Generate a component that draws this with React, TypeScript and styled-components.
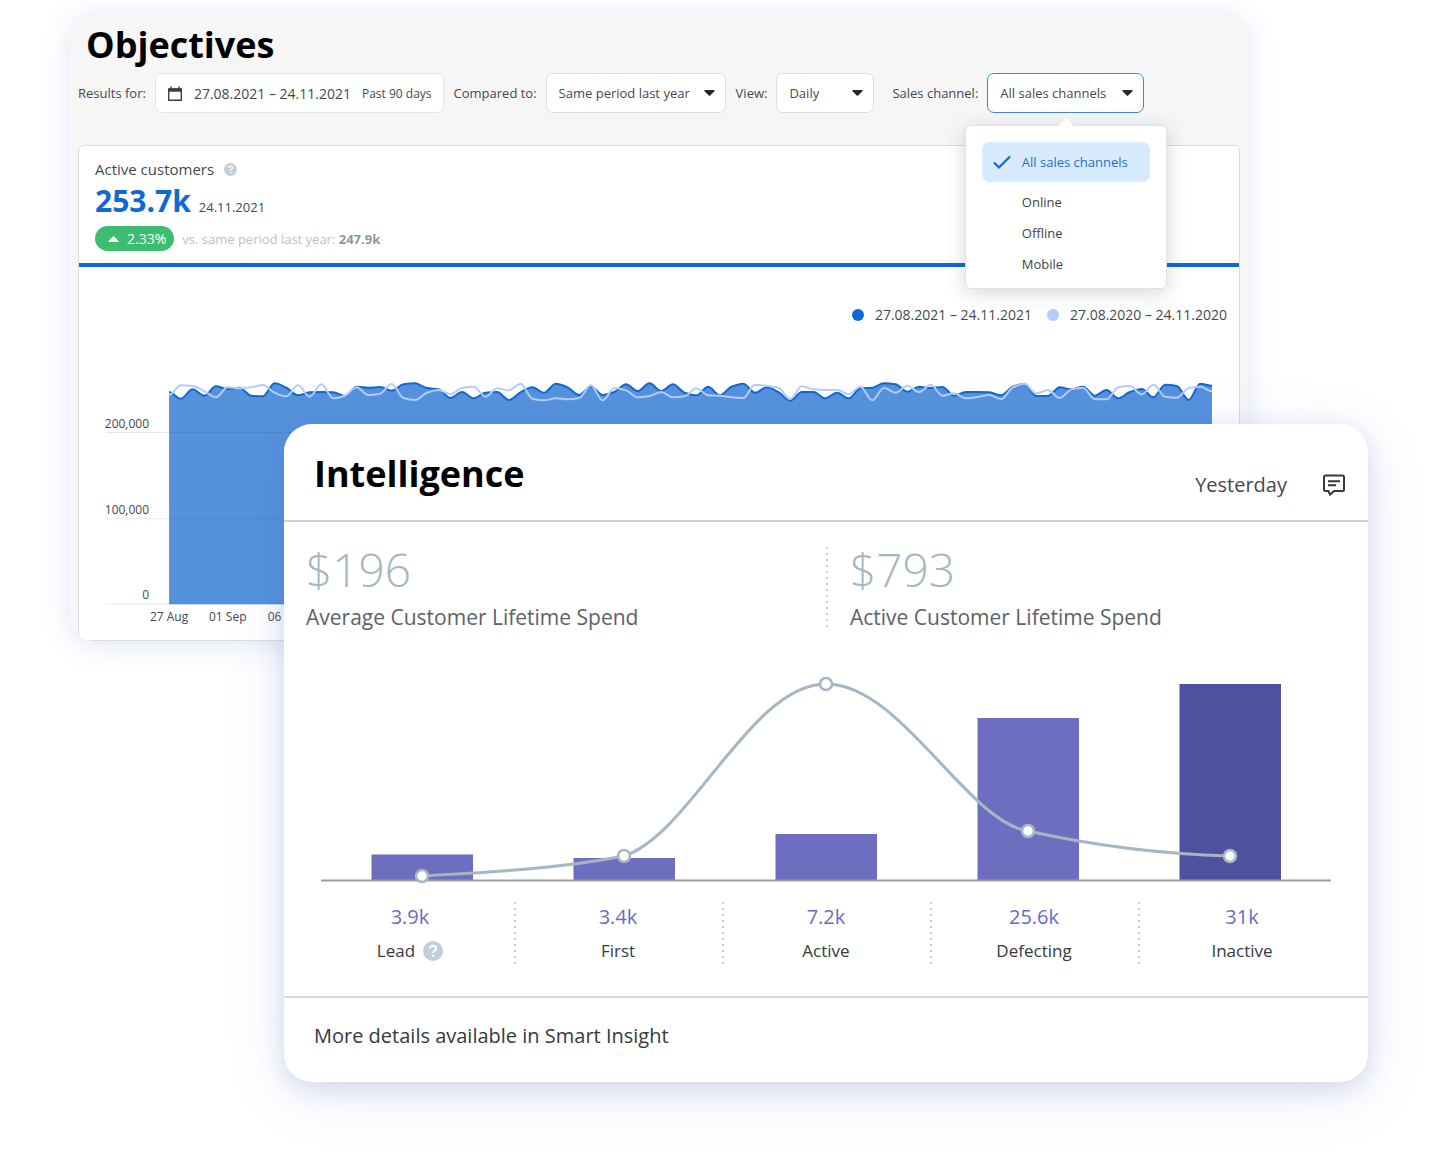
import React, { useState } from 'react';
import styled, { createGlobalStyle } from 'styled-components';

const font = '"Open Sans", "Noto Sans", sans-serif';

const GlobalStyle = createGlobalStyle`
  *, *::before, *::after { box-sizing: border-box; }
  body { margin: 0; background: #fff; color: #45494f; font: 13px/24px ${font}; }
  h2, p, ul, dl, dd, dt { margin: 0; padding: 0; }
  button, select { font: inherit; color: inherit; }
`;

const Page = styled.main`
  padding: 12px 72px 82px 70px;
`;

const Card = styled.section`
  border-radius: 28px;
  overflow: hidden;
  box-shadow: 0 12px 60px rgba(96, 116, 210, 0.13), 0 6px 24px rgba(84, 100, 180, 0.2);
`;

const ObjectivesCard = styled(Card)`
  margin-right: 120px;
  padding: 9px 8px 0;
  border-radius: 24px;
  background: #f6f6f6;
  box-shadow: 0 4px 28px rgba(96, 116, 210, 0.18);
`;

const IntelligenceCard = styled(Card)`
  position: relative;
  margin: -217px 0 0 214px;
  background: #fff;
`;

const Title = styled.h2`
  color: #000;
  font-size: 36px;
  font-weight: 700;
  line-height: 48px;
`;

const ObjectivesTitle = styled(Title)`
  padding-left: 8px;
`;

/* Filter bar */

const Filter = styled.div`
  display: flex;
  align-items: center;
  gap: 9px;
  white-space: nowrap;
`;

const Filters = styled.form`
  display: flex;
  gap: 10px;
  margin: 4px 0 32px;

  ${Filter}:last-child { margin-left: 8px; }
`;

const RangeButton = styled.button`
  display: flex;
  align-items: center;
  gap: 11px;
  height: 40px;
  padding: 2px 11px 0;
  border: 1px solid #e4e5e6;
  border-radius: 7px;
  background: #fff;
  font-size: 14px;
`;

const RangeNote = styled.span`
  font-size: 12px;
`;

const SelectBox = styled.div<{ $width: number }>`
  position: relative;
  width: ${(p) => p.$width}px;
`;

const Select = styled.select<{ $open?: boolean }>`
  appearance: none;
  display: block;
  width: 100%;
  height: 40px;
  padding: 0 28px 0 12px;
  border: 1px solid ${(p) => (p.$open ? '#3d85dc' : '#dcdedf')};
  border-radius: 7px;
  background: #fff;
`;

const Caret = styled.svg`
  position: absolute;
  top: 17px;
  right: 11px;
  pointer-events: none;
`;

const Menu = styled.ul`
  position: absolute;
  top: 52px;
  left: 50%;
  z-index: 2;
  width: 202px;
  margin-left: -101px;
  padding: 16px 16px 9px;
  border: 1px solid #dfe2e4;
  border-radius: 6px;
  background: #fff;
  box-shadow: 0 4px 20px rgba(40, 60, 70, 0.2);
  list-style: none;

  &::before {
    content: '';
    position: absolute;
    top: -6px;
    left: 50%;
    width: 10px;
    height: 10px;
    margin-left: -5px;
    background: #fff;
    transform: rotate(45deg);
  }
`;

const MenuItem = styled.button<{ $selected: boolean }>`
  display: grid;
  grid-template-columns: 20px 1fr;
  align-items: center;
  gap: 10px;
  width: 100%;
  height: ${(p) => (p.$selected ? 40 : 31)}px;
  margin-bottom: ${(p) => (p.$selected ? 4 : 0)}px;
  padding: 0 10px;
  border: 0;
  border-radius: 7px;
  background: ${(p) => (p.$selected ? '#d8ebfe' : 'none')};
  color: ${(p) => (p.$selected ? '#1a6fd6' : '#3f4348')};
  text-align: left;
`;

/* Active customers panel */

const Panel = styled.div`
  border: 1px solid #dcdcdc;
  border-radius: 6px;
  background: #fff;
`;

const PanelHead = styled.div`
  padding: 11px 16px 12px;
  border-bottom: 4px solid #0f69d3;
`;

const Metric = styled.div`
  display: flex;
  align-items: center;
  gap: 10px;
  font-size: 15px;
`;

const Reading = styled.p`
  display: flex;
  align-items: baseline;
  gap: 8px;
  height: 40px;
  line-height: 40px;
`;

const ReadingValue = styled.strong`
  color: #0f69d3;
  font-size: 30px;
  font-weight: 700;
`;

const Comparison = styled.p`
  display: flex;
  align-items: center;
  gap: 8px;
  margin-top: 5px;
  color: #bcc1c6;

  strong { color: #8b96a1; font-weight: 700; }
`;

const Growth = styled.span`
  display: flex;
  align-items: center;
  gap: 8px;
  height: 25px;
  padding: 0 8px 0 13px;
  border-radius: 13px;
  background: #3cbd6f;
  color: #fff;
  font-size: 14px;
`;

const Legend = styled.ul`
  display: flex;
  justify-content: flex-end;
  gap: 15px;
  padding: 36px 12px 0;
  list-style: none;
  font-size: 14px;
`;

const LegendItem = styled.li<{ $color: string }>`
  display: flex;
  align-items: center;
  gap: 11px;

  &::before {
    content: '';
    width: 12px;
    height: 12px;
    border-radius: 50%;
    background: ${(p) => p.$color};
  }
`;

const Chart = styled.svg`
  display: block;
  width: 100%;
  height: auto;

  text { fill: #45494f; font: 12px ${font}; }
`;

/* Intelligence card */

const CardHead = styled.header`
  display: flex;
  align-items: center;
  justify-content: space-between;
  height: 98px;
  padding: 4px 22px 0 30px;
  border-bottom: 2px solid #cfd3d4;
`;

const HeadActions = styled.div`
  display: flex;
  align-items: center;
  gap: 35px;
  padding-top: 22px;
  font-size: 20px;
`;

const IconButton = styled.button`
  display: flex;
  padding: 0;
  border: 0;
  background: none;
  color: #36393d;
`;

const dotted = 'repeating-linear-gradient(#cbcdcf 0 2px, transparent 2px 6px)';

const Kpis = styled.div`
  display: grid;
  grid-template-columns: 1fr 1fr;
  margin-top: 25px;
`;

const Kpi = styled.div`
  height: 83px;
  padding-left: 22px;

  & + & {
    padding-left: 24px;
    background: ${dotted} 0 0 / 2px 100% no-repeat;
  }
`;

const KpiValue = styled.p`
  color: #a5b5c3;
  font-size: 46px;
  font-weight: 300;
  line-height: 44px;
`;

const KpiLabel = styled.p`
  margin-top: 14px;
  color: #5d6268;
  font-size: 21px;
`;

const BarChartArea = styled.div`
  margin-top: 44px;
  padding: 0 37px;
`;

const Stages = styled.dl`
  display: grid;
  grid-template-columns: repeat(5, 1fr);
  margin: 18px 22px 30px;
`;

const Stage = styled.div`
  display: flex;
  flex-direction: column-reverse;
  text-align: center;

  & + & { background: ${dotted} 0 0 / 2px 100% no-repeat; }
`;

const StageValue = styled.dd`
  color: #6a6bc4;
  font-size: 20px;
  line-height: 30px;
`;

const StageName = styled.dt`
  display: flex;
  align-items: center;
  justify-content: center;
  gap: 8px;
  height: 34px;
  padding-top: 3px;
  color: #36393d;
  font-size: 17px;
`;

const CardFoot = styled.footer`
  padding: 24px 30px 32px;
  border-top: 2px solid #d4d6da;
  color: #36393d;
  font-size: 20px;
  line-height: 28px;
`;

function HelpIcon({ size }: { size: number }) {
  return (
    <svg width={size} height={size} viewBox="0 0 20 20" fill="none" role="img" aria-label="Help">
      <circle cx="10" cy="10" r="10" fill="#c1cfdd" />
      <path d="M6.9 7.6C7 5.8 8.300 4.800 10 4.800s3.100 1.100 3.100 2.700c0 2.100-3 2.300-3 4.500" stroke="#fff" strokeWidth="2" />
      <circle cx="10.100" cy="14.700" r="1.300" fill="#fff" />
    </svg>
  );
}

function CalendarIcon() {
  return (
    <svg width="16" height="16" viewBox="0 0 16 16" fill="none" aria-hidden="true">
      <path d="M1.700 3h12.600v11.300H1.700z" stroke="#3a3e44" strokeWidth="1.400" strokeLinejoin="round" />
      <path d="M1.200 2.400h13.600v3.400H1.200z" fill="#3a3e44" />
      <path d="M4 .6v3M12 .6v3" stroke="#3a3e44" strokeWidth="1.500" />
    </svg>
  );
}

function CommentIcon() {
  return (
    <svg width="24" height="24" viewBox="0 0 24 24" fill="none" stroke="currentColor" strokeWidth="2" strokeLinejoin="round" aria-hidden="true">
      <path d="M3.500 2.500h17a1.500 1.500 0 0 1 1.500 1.500v12.500a1.500 1.500 0 0 1-1.500 1.500H12l-4 3.700L6.500 18h-3A1.500 1.500 0 0 1 2 16.500V4a1.500 1.500 0 0 1 1.500-1.500z" />
      <path d="M6 8.300h12M6 12.300h8" />
    </svg>
  );
}

function CheckIcon() {
  return (
    <svg width="20" height="16" viewBox="0 0 20 16" fill="none" aria-hidden="true">
      <path d="M2 8.500l5 5L18 2.500" stroke="#0f69d3" strokeWidth="2.200" />
    </svg>
  );
}

interface DropdownProps {
  id: string;
  label: string;
  width: number;
  value: string;
  options: string[];
  open?: boolean;
  onChange: (value: string) => void;
}

function Dropdown({ id, label, width, value, options, open, onChange }: DropdownProps) {
  return (
    <Filter>
      <label htmlFor={id}>{label}</label>
      <SelectBox $width={width}>
        <Select id={id} $open={open} value={value} onChange={(e) => onChange(e.target.value)}>
          {options.map((o) => <option key={o}>{o}</option>)}
        </Select>
        <Caret width="11" height="6" viewBox="0 0 11 6" aria-hidden="true">
          <path d="M1 0h9a.7.7 0 0 1 .5 1.200L6.200 5.600a1 1 0 0 1-1.400 0L.5 1.200A.7.7 0 0 1 1 0z" fill="#26292d" />
        </Caret>
        {open && (
          <Menu role="listbox" aria-label={label}>
            {options.map((o) => (
              <li key={o} role="presentation">
                <MenuItem type="button" role="option" aria-selected={o === value} $selected={o === value} onClick={() => onChange(o)}>
                  {o === value ? <CheckIcon /> : <span />}
                  {o}
                </MenuItem>
              </li>
            ))}
          </Menu>
        )}
      </SelectBox>
    </Filter>
  );
}

type Point = [number, number];

/* Cubic path that never overshoots its points. */
function smoothPath(pts: Point[]) {
  const slope = pts.map((_, i) => {
    if (i === 0 || i === pts.length - 1) return 0;
    const a = (pts[i][1] - pts[i - 1][1]) / (pts[i][0] - pts[i - 1][0]);
    const b = (pts[i + 1][1] - pts[i][1]) / (pts[i + 1][0] - pts[i][0]);
    return a * b <= 0 ? 0 : (2 * a * b) / (a + b);
  });
  return pts.reduce((d, [x, y], i) => {
    if (i === 0) return `M${x.toFixed(1)},${y.toFixed(1)}`;
    const [px, py] = pts[i - 1];
    const h = (x - px) / 3;
    const c = [px + h, py + slope[i - 1] * h, x - h, y - slope[i] * h, x, y];
    return `${d}C${c.map((n) => n.toFixed(1)).join(' ')}`;
  }, '');
}

/* Daily dips below the chart ceiling, in thirds of a unit. */
const currentYear = [
  66, 86, 58, 77, 49, 57, 53, 77, 79, 40, 53, 76, 67, 66, 67, 78, 50, 53, 51, 62, 43, 40, 54, 58, 84, 66, 85, 68, 66, 90,
  67, 52, 68, 41, 52, 75, 49, 75, 66, 43, 63, 40, 63, 43, 68, 76, 50, 76, 50, 41, 68, 52, 66, 92, 66, 66, 85, 68, 85, 55,
  53, 40, 43, 65, 50, 54, 51, 77, 66, 66, 67, 76, 50, 41, 78, 78, 52, 58, 50, 77, 60, 85, 66, 57, 82, 44, 48, 90, 41, 47,
];
const previousYear = [
  74, 46, 48, 63, 82, 52, 55, 52, 45, 68, 79, 46, 80, 43, 85, 77, 52, 75, 71, 42, 84, 90, 68, 60, 72, 54, 50, 80, 55, 61,
  41, 86, 91, 85, 88, 84, 46, 91, 54, 61, 82, 78, 66, 82, 79, 55, 76, 77, 82, 84, 44, 47, 53, 87, 49, 58, 60, 59, 73, 50,
  91, 54, 68, 47, 66, 44, 77, 70, 85, 81, 75, 87, 52, 41, 70, 60, 84, 58, 53, 87, 88, 52, 48, 73, 44, 80, 83, 54, 50, 64,
];

const plot = { left: 90, right: 1132, ceiling: 43, base: 277 };
const toPoints = (dips: number[]): Point[] =>
  dips.map((d, i) => [plot.left + ((plot.right - plot.left) * i) / (dips.length - 1), plot.ceiling + d / 3]);

const yTicks = [
  { label: '200,000', y: 105.5 },
  { label: '100,000', y: 191.5 },
  { label: '0', y: 276.5 },
];
const xTicks = ['27 Aug', '01 Sep', '06 Sep'];

function CustomersChart() {
  const line = smoothPath(toPoints(currentYear));
  return (
    <Chart viewBox="0 0 1159 313" role="img" aria-label="Active customers per day">
      <path d={`${line}L${plot.right},${plot.base}L${plot.left},${plot.base}Z`} fill="#5592dc" />
      <path d={line} fill="none" stroke="#0f69d3" strokeWidth="2" />
      <path d={smoothPath(toPoints(previousYear))} fill="none" stroke="#b5ccfb" strokeWidth="2" />
      {yTicks.map((t) => (
        <g key={t.label}>
          <line x1="27" x2="1147" y1={t.y} y2={t.y} stroke="#1c2a3a" strokeOpacity="0.1" />
          <text x="70" y={t.y - 5} textAnchor="end">{t.label}</text>
        </g>
      ))}
      {xTicks.map((t, i) => (
        <text key={t} x={90 + i * 58.6} y="294" textAnchor="middle">{t}</text>
      ))}
    </Chart>
  );
}

const stages = [
  { name: 'Lead', value: '3.9k', top: 180.5, spend: 202 },
  { name: 'First', value: '3.4k', top: 184, spend: 182 },
  { name: 'Active', value: '7.2k', top: 160, spend: 10 },
  { name: 'Defecting', value: '25.6k', top: 44, spend: 157 },
  { name: 'Inactive', value: '31k', top: 10, spend: 182 },
];

function LifecycleChart() {
  const x = (i: number) => 101 + i * 202;
  return (
    <Chart viewBox="0 0 1010 210" role="img" aria-label="Customers by lifecycle stage">
      {stages.map((s, i) => (
        <rect key={s.name} x={x(i) - 50.5} y={s.top} width="101.500" height={206 - s.top} fill={i === 4 ? '#50519e' : '#6d6ec0'} />
      ))}
      <path d="M0 206.500H1010" stroke="#9a9da0" strokeWidth="2" />
      <path
        d="M101 202C168 198 236 195 303 182C370 160 430 10 505 10C580 10 645 147 707 157C774 172 842 180 909 182"
        fill="none"
        stroke="#a6b6c4"
        strokeWidth="3"
      />
      {stages.map((s, i) => (
        <circle key={s.name} cx={x(i)} cy={s.spend} r="6" fill="#fff" stroke="#a6b6c4" strokeWidth="2.500" />
      ))}
    </Chart>
  );
}

export default function App() {
  const [period, setPeriod] = useState('Same period last year');
  const [view, setView] = useState('Daily');
  const [channel, setChannel] = useState('All sales channels');

  return (
    <>
      <GlobalStyle />
      <Page>
        <ObjectivesCard>
          <ObjectivesTitle>Objectives</ObjectivesTitle>
          <Filters>
            <Filter>
              <label htmlFor="range">Results for:</label>
              <RangeButton id="range" type="button">
                <CalendarIcon />
                <span>27.08.2021 – 24.11.2021</span>
                <RangeNote>Past 90 days</RangeNote>
              </RangeButton>
            </Filter>
            <Dropdown id="period" label="Compared to:" width={180} value={period} options={['Same period last year']} onChange={setPeriod} />
            <Dropdown id="view" label="View:" width={98} value={view} options={['Daily']} onChange={setView} />
            <Dropdown
              id="channel"
              label="Sales channel:"
              width={157}
              value={channel}
              options={['All sales channels', 'Online', 'Offline', 'Mobile']}
              open
              onChange={setChannel}
            />
          </Filters>
          <Panel>
            <PanelHead>
              <Metric>
                Active customers
                <HelpIcon size={13} />
              </Metric>
              <Reading>
                <ReadingValue>253.7k</ReadingValue>
                24.11.2021
              </Reading>
              <Comparison>
                <Growth>
                  <svg width="11" height="6" viewBox="0 0 11 6" aria-hidden="true">
                    <path d="M1 6h9a.5.5 0 0 0 .4-.9L6.200.5a1 1 0 0 0-1.400 0L.6 5.100A.5.5 0 0 0 1 6z" fill="#fff" />
                  </svg>
                  2.33%
                </Growth>
                <span>vs. same period last year: <strong>247.9k</strong></span>
              </Comparison>
            </PanelHead>
            <Legend>
              <LegendItem $color="#0f69d3">27.08.2021 – 24.11.2021</LegendItem>
              <LegendItem $color="#b5ccfb">27.08.2020 – 24.11.2020</LegendItem>
            </Legend>
            <CustomersChart />
          </Panel>
        </ObjectivesCard>

        <IntelligenceCard>
          <CardHead>
            <Title>Intelligence</Title>
            <HeadActions>
              Yesterday
              <IconButton type="button" aria-label="Comments"><CommentIcon /></IconButton>
            </HeadActions>
          </CardHead>
          <Kpis>
            <Kpi>
              <KpiValue>$196</KpiValue>
              <KpiLabel>Average Customer Lifetime Spend</KpiLabel>
            </Kpi>
            <Kpi>
              <KpiValue>$793</KpiValue>
              <KpiLabel>Active Customer Lifetime Spend</KpiLabel>
            </Kpi>
          </Kpis>
          <BarChartArea>
            <LifecycleChart />
          </BarChartArea>
          <Stages>
            {stages.map((s) => (
              <Stage key={s.name}>
                <StageName>
                  {s.name}
                  {s.name === 'Lead' && <HelpIcon size={20} />}
                </StageName>
                <StageValue>{s.value}</StageValue>
              </Stage>
            ))}
          </Stages>
          <CardFoot>More details available in Smart Insight</CardFoot>
        </IntelligenceCard>
      </Page>
    </>
  );
}
